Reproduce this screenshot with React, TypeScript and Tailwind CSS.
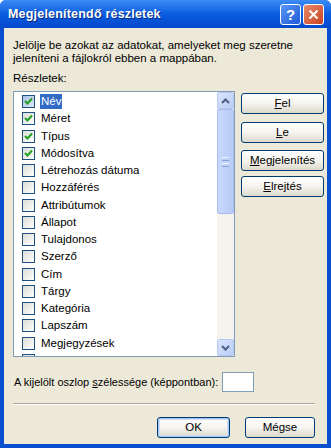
import React from 'react';

// XP-style "Choose details" dialog

const items: { label: string; checked: boolean }[] = [
    { label: 'Név', checked: true },
    { label: 'Méret', checked: true },
    { label: 'Típus', checked: true },
    { label: 'Módosítva', checked: true },
    { label: 'Létrehozás dátuma', checked: false },
    { label: 'Hozzáférés', checked: false },
    { label: 'Attribútumok', checked: false },
    { label: 'Állapot', checked: false },
    { label: 'Tulajdonos', checked: false },
    { label: 'Szerző', checked: false },
    { label: 'Cím', checked: false },
    { label: 'Tárgy', checked: false },
    { label: 'Kategória', checked: false },
    { label: 'Lapszám', checked: false },
    { label: 'Megjegyzések', checked: false },
    { label: '', checked: false },
];

function CheckBox({ checked, focused }: { checked: boolean; focused?: boolean }) {
    return (
        <div
            className={
                'w-[13px] h-[13px] shrink-0 border border-[#1c5180] flex items-center justify-center ' +
                (focused
                    ? 'bg-gradient-to-br from-[#a9bfe3] to-[#dfe8f6]'
                    : 'bg-gradient-to-br from-[#dcdcd7] to-[#ffffff]')
            }
        >
            {checked && (
                <svg width="9" height="9" viewBox="0 0 9 9">
                    <path d="M1 4 L3.5 6.5 L8 1.5" fill="none" stroke="#21a121" strokeWidth="2" />
                </svg>
            )}
        </div>
    );
}

function XpButton({ children, className = '' }: { children: React.ReactNode; className?: string }) {
    return (
        <button
            className={
                'h-[21px] rounded-[3px] border border-[#003c74] bg-gradient-to-b from-[#ffffff] via-[#f5f4ef] to-[#dcd9cc] text-[11.5px] text-black leading-none flex items-center justify-center ' +
                className
            }
        >
            {children}
        </button>
    );
}

export default function App() {
    return (
        <div
            className="w-[331px] h-[448px] flex flex-col bg-[#0a4fd0] overflow-hidden rounded-t-[6px]"
            style={{ fontFamily: '"Liberation Sans", Arial, sans-serif' }}
        >
            {/* Title bar */}
            <div className="h-[28px] shrink-0 flex items-center pl-[8px] pr-[7px] bg-gradient-to-b from-[#3b8cf5] via-[#0a5ce0] to-[#0548cc]">
                <span className="text-white font-bold text-[12.5px] tracking-[0.2px] [text-shadow:1px_1px_0_#0a2a80]">
                    Megjelenítendő részletek
                </span>
                <div className="ml-auto flex gap-[2px]">
                    <div className="w-[21px] h-[21px] rounded-[3px] border border-white bg-gradient-to-br from-[#5a96f5] to-[#1f5ad8] flex items-center justify-center text-white font-bold text-[15px] leading-none">
                        ?
                    </div>
                    <div className="w-[21px] h-[21px] rounded-[3px] border border-white bg-gradient-to-br from-[#e88a6a] to-[#c9401c] flex items-center justify-center">
                        <svg width="11" height="11" viewBox="0 0 11 11">
                            <path d="M1.5 1.5 L9.5 9.5 M9.5 1.5 L1.5 9.5" stroke="white" strokeWidth="2" />
                        </svg>
                    </div>
                </div>
            </div>

            {/* Body */}
            <div className="flex-1 mx-[4px] mb-[4px] bg-[#ece9d8] pl-[9px] pr-[3px] pt-[11px] flex flex-col text-[11px] text-black">
                <p className="leading-[13px] text-[11.5px]">
                    Jelölje be azokat az adatokat, amelyeket meg szeretne
                    <br />
                    jeleníteni a fájlokról ebben a mappában.
                </p>
                <p className="leading-[13px] mt-[7px] text-[11.5px]">Részletek:</p>

                <div className="flex mt-[6px]">
                    {/* List */}
                    <div className="w-[222px] h-[266px] border border-[#7f9db9] bg-white flex overflow-hidden">
                        <div className="flex-1 pt-[1px] overflow-hidden text-[11.5px]">
                            {items.map((it, i) => (
                                <div key={i} className="h-[17.25px] flex items-center pl-[8px]">
                                    <CheckBox checked={it.checked} focused={i === 0} />
                                    {it.label && (
                                        <span
                                            className={
                                                'ml-[5px] px-[1px] leading-[15px] ' +
                                                (i === 0 ? 'bg-[#316ac5] text-white' : '')
                                            }
                                        >
                                            {it.label}
                                        </span>
                                    )}
                                </div>
                            ))}
                        </div>
                        {/* Scrollbar */}
                        <div className="w-[17px] shrink-0 bg-[#f4f3ee] flex flex-col">
                            <div className="h-[17px] rounded-[2px] border border-[#b8c9ef] bg-gradient-to-br from-[#dbe5fb] to-[#b9cdf7] flex items-center justify-center">
                                <svg width="9" height="6" viewBox="0 0 9 6">
                                    <path d="M1 5 L4.5 1.5 L8 5" fill="none" stroke="#4d6185" strokeWidth="2" />
                                </svg>
                            </div>
                            <div className="h-[105px] rounded-[2px] border border-[#a9bdec] bg-gradient-to-r from-[#c9d8fb] to-[#b7cbf6] flex flex-col items-center justify-center gap-[2px]">
                                <div className="w-[7px] h-[1px] bg-[#eef3ff]" />
                                <div className="w-[7px] h-[1px] bg-[#8da4d8]" />
                                <div className="w-[7px] h-[1px] bg-[#eef3ff]" />
                                <div className="w-[7px] h-[1px] bg-[#8da4d8]" />
                            </div>
                            <div className="flex-1" />
                            <div className="h-[17px] rounded-[2px] border border-[#b8c9ef] bg-gradient-to-br from-[#dbe5fb] to-[#b9cdf7] flex items-center justify-center">
                                <svg width="9" height="6" viewBox="0 0 9 6">
                                    <path d="M1 1 L4.5 4.5 L8 1" fill="none" stroke="#4d6185" strokeWidth="2" />
                                </svg>
                            </div>
                        </div>
                    </div>

                    {/* Side buttons */}
                    <div className="ml-[6px] w-[83px] flex flex-col pt-[2px]">
                        <XpButton>
                            <span className="underline">F</span>el
                        </XpButton>
                        <XpButton className="mt-[8px]">
                            <span className="underline">L</span>e
                        </XpButton>
                        <XpButton className="mt-[7px]">
                            <span className="underline">M</span>egjelenítés
                        </XpButton>
                        <XpButton className="mt-[5px]">
                            <span className="underline">E</span>lrejtés
                        </XpButton>
                    </div>
                </div>

                {/* Column width */}
                <div className="flex items-center mt-[15px]">
                    <span className="pl-[1px]">
                        A kijelölt oszlop <span className="underline">s</span>zélessége (képpontban):
                    </span>
                    <div className="ml-auto mr-[70px] w-[32px] h-[20px] border border-[#7f9db9] bg-white" />
                </div>

                <div className="mt-[11px] mr-[9px] h-[2px] border-t border-[#aca899] border-b border-b-white" />

                <div className="flex justify-end mt-[12px] mr-[9px] gap-[15px]">
                    <XpButton className="w-[73px] shadow-[inset_0_0_0_1px_#a8c4f0,inset_0_0_0_2px_#cfdcf7]">OK</XpButton>
                    <XpButton className="w-[70px]">Mégse</XpButton>
                </div>
            </div>
        </div>
    );
}
